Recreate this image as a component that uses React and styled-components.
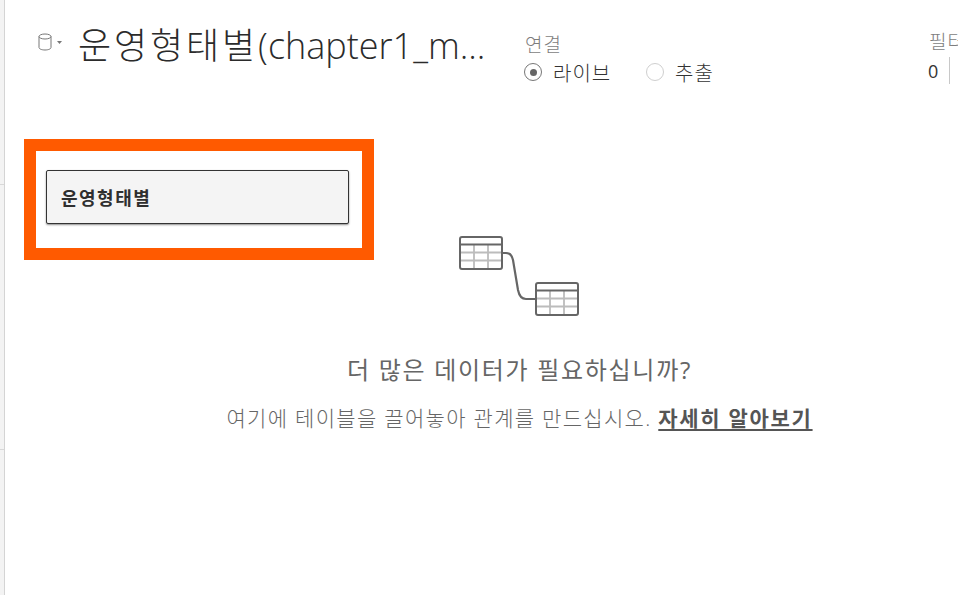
import React from "react";
import styled, { createGlobalStyle } from "styled-components";

const Global = createGlobalStyle`
  html, body { margin: 0; padding: 0; background: #fff; }
  body { font-family: "Open Sans", "Noto Sans CJK KR", sans-serif; overflow: hidden; }
`;

const Page = styled.div`
  display: flex;
  width: 958px;
  height: 595px;
  overflow: hidden;
`;

const Rail = styled.aside`
  flex: none;
  width: 4px;
  border-right: 1px solid #d4d4d4;
  background: #f3f3f3;
  display: flex;
  flex-direction: column;
`;

const RailSection = styled.div`
  height: ${(p) => p.$h}px;
  flex: none;
  border-bottom: 1px solid #d8d8d8;
`;

const Main = styled.main`
  flex: 1;
  min-width: 0;
  display: flex;
  flex-direction: column;
`;

const Header = styled.header`
  height: 139px;
  flex: none;
  display: flex;
  align-items: flex-start;
  padding: 22px 0 0 33px;
  box-sizing: border-box;
  white-space: nowrap;
`;

const SourceIcon = styled.div`
  display: flex;
  align-items: flex-start;
  gap: 5px;
  width: 40px;
  flex: none;
  padding-top: 11px;
`;

const Title = styled.h1`
  margin: 0;
  width: 447px;
  flex: none;
  font-size: 36px;
  line-height: 48px;
  font-weight: 300;
  color: #2b2b2b;
  overflow: hidden;
`;

const Hangul = styled.span`
  letter-spacing: 2.9px;
`;

const Connection = styled.section`
  width: 404px;
  flex: none;
  padding-top: 10px;
`;

const FieldLabel = styled.div`
  font-size: 19px;
  line-height: 26px;
  letter-spacing: 1px;
  color: #7d7d7d;
  font-weight: 300;
`;

const RadioRow = styled.div`
  display: flex;
  align-items: center;
  height: 28px;
  margin-left: -1px;
`;

const RadioItem = styled.label`
  display: flex;
  align-items: center;
  gap: 11px;
  width: 122px;
  font-size: 20px;
  letter-spacing: 1px;
  font-weight: 300;
  color: #333;
`;

const RadioCircle = styled.span`
  width: 18px;
  height: 18px;
  box-sizing: border-box;
  border-radius: 50%;
  border: 1px solid ${(p) => (p.$on ? "#777" : "#cfcfcf")};
  display: flex;
  align-items: center;
  justify-content: center;
  &::after {
    content: "";
    display: ${(p) => (p.$on ? "block" : "none")};
    width: 7px;
    height: 7px;
    border-radius: 50%;
    background: #666;
  }
`;

const Filters = styled.section`
  padding-top: 7px;
`;

const FilterCount = styled.div`
  display: flex;
  align-items: center;
  height: 27px;
  gap: 11px;
  margin-top: 2px;
  margin-left: -1px;
  font-size: 18px;
  color: #333;
  &::after {
    content: "";
    width: 1px;
    height: 27px;
    background: #c8c8c8;
  }
`;

const Canvas = styled.div`
  flex: 1;
  display: grid;
  grid-template-columns: 1fr;
  align-items: start;
`;

const Highlight = styled.div`
  grid-area: 1 / 1;
  justify-self: start;
  margin-left: 19px;
  width: 350px;
  height: 121px;
  box-sizing: border-box;
  border: 12px solid #ff5a00;
  padding: 19px 10px;
`;

const TableButton = styled.button`
  display: flex;
  align-items: center;
  width: 303px;
  height: 54px;
  margin: 0;
  padding: 0 14px;
  box-sizing: border-box;
  background: #f4f4f4;
  border: 1px solid #333;
  border-radius: 2px;
  box-shadow: 0 1px 2px rgba(0, 0, 0, 0.45);
  font-family: inherit;
  font-size: 18px;
  letter-spacing: 1.5px;
  font-weight: 700;
  color: #2f2f2f;
`;

const Hint = styled.div`
  grid-area: 1 / 1;
  display: flex;
  flex-direction: column;
  align-items: center;
  margin-top: 97px;
  padding-left: 151px;
  width: 878px;
  box-sizing: border-box;
`;

const HintTitle = styled.h2`
  margin: 35px 0 0;
  font-size: 24px;
  line-height: 34px;
  letter-spacing: 1.7px;
  font-weight: 400;
  color: #666;
  white-space: nowrap;
`;

const HintText = styled.p`
  margin: 16px 0 0;
  font-size: 21px;
  line-height: 30px;
  letter-spacing: 1.3px;
  font-weight: 300;
  color: #666;
  white-space: nowrap;
`;

const LearnMore = styled.a`
  font-weight: 700;
  letter-spacing: 1.7px;
  color: #555;
  text-decoration: underline;
  text-underline-offset: 3px;
`;

const Diagram = () => {
  const table = (x, y) => (
    <g transform={`translate(${x} ${y})`}>
      <path d="M15 8v24M29 8v24M1 16.5h42M1 24.5h42" stroke="#bcbcbc" strokeWidth="1.8" fill="none" />
      <rect x="1" y="1" width="42" height="32" rx="2" fill="none" stroke="#666" strokeWidth="2" />
      <path d="M1 8.5h42" stroke="#666" strokeWidth="2" fill="none" />
    </g>
  );
  return (
    <svg width="122" height="82" viewBox="0 0 122 82" style={{ display: "block" }}>
      {table(0, 0)}
      {table(76, 46)}
      <path d="M44 17h3c4 0 6 2 7 7l5 30c1 5 3 9 8 9h9" fill="none" stroke="#666" strokeWidth="2.2" />
    </svg>
  );
};

export default function App() {
  return (
    <Page>
      <Global />
      <Rail>
        <RailSection $h={184} />
        <RailSection $h={264} />
      </Rail>
      <Main>
        <Header>
          <SourceIcon>
            <svg width="14" height="18" viewBox="0 0 14 18" fill="none" stroke="#777" strokeWidth="1">
              <ellipse cx="7" cy="3.5" rx="6" ry="2.5" />
              <path d="M1 3.5v11c0 1.4 2.7 2.5 6 2.5s6-1.1 6-2.5v-11" />
            </svg>
            <svg width="5" height="4" viewBox="0 0 5 4" style={{ marginTop: 8 }}>
              <path d="M0 0h5L2.5 3z" fill="#777" />
            </svg>
          </SourceIcon>
          <Title>
            <Hangul>운영형태별</Hangul>(chapter1_m...
          </Title>
          <Connection>
            <FieldLabel>연결</FieldLabel>
            <RadioRow>
              <RadioItem>
                <RadioCircle $on />
                라이브
              </RadioItem>
              <RadioItem>
                <RadioCircle />
                추출
              </RadioItem>
            </RadioRow>
          </Connection>
          <Filters>
            <FieldLabel>필터</FieldLabel>
            <FilterCount>0</FilterCount>
          </Filters>
        </Header>
        <Canvas>
          <Highlight>
            <TableButton>운영형태별</TableButton>
          </Highlight>
          <Hint>
            <Diagram />
            <HintTitle>더 많은 데이터가 필요하십니까?</HintTitle>
            <HintText>
              여기에 테이블을 끌어놓아 관계를 만드십시오. <LearnMore>자세히 알아보기</LearnMore>
            </HintText>
          </Hint>
        </Canvas>
      </Main>
    </Page>
  );
}
